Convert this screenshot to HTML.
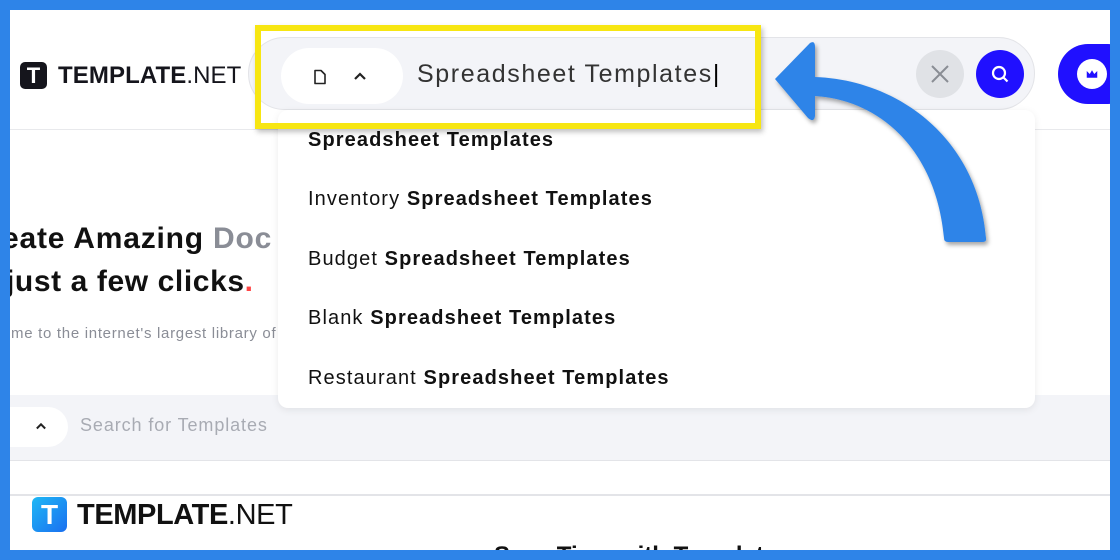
<!DOCTYPE html>
<html><head><meta charset="utf-8"><style>
*{margin:0;padding:0;box-sizing:border-box}
body{width:1120px;height:560px;overflow:hidden;background:#2e84e8;font-family:"Liberation Sans",sans-serif;position:relative}
.page{position:absolute;left:10px;top:10px;width:1100px;height:540px;background:#fff;overflow:hidden}
.abs{position:absolute}
.dd div{position:absolute;left:30px;font-size:20px;color:#111;white-space:nowrap;letter-spacing:1.1px}
.dd b{font-weight:bold}
</style></head><body>
<div class="page">
 <div class="abs" style="left:0;top:119px;width:1100px;height:1px;background:#e8e9ec"></div>
 <div class="abs" style="left:10px;top:52px;width:27px;height:27px;background:#15151c;border-radius:5px;color:#fff;font-weight:bold;font-size:22px;text-align:center;line-height:28px">T</div>
 <div class="abs" style="left:48px;top:52px;font-size:24px;color:#15151c;line-height:28px;letter-spacing:0.1px"><b>TEMPLATE</b>.NET</div>
 <div class="abs" style="left:238px;top:27px;width:787px;height:73px;background:#f3f4f8;border:1px solid #e3e4e8;border-radius:37px"></div>
 <div class="abs" style="left:271px;top:38px;width:122px;height:56px;background:#fff;border-radius:28px"></div>
 <svg class="abs" style="left:303px;top:59px" width="14" height="16" viewBox="0 0 14 16"><path d="M2 1.5h6l4 4v9H2z" fill="none" stroke="#222" stroke-width="1.6" stroke-linejoin="round"/></svg>
 <svg class="abs" style="left:342px;top:60px" width="16" height="12" viewBox="0 0 16 12"><path d="M3 9l5-5 5 5" fill="none" stroke="#222" stroke-width="2.2"/></svg>
 <div class="abs" style="left:407px;top:49px;font-size:25px;color:#333;line-height:30px;letter-spacing:1.6px;white-space:nowrap">Spreadsheet Templates<span style="color:#000;letter-spacing:0">|</span></div>
 <div class="abs" style="left:906px;top:40px;width:48px;height:48px;border-radius:50%;background:#e0e2e6"></div>
 <svg class="abs" style="left:920px;top:54px" width="20" height="20" viewBox="0 0 20 20"><path d="M2 2L18 18M18 2L2 18" stroke="#8a8d94" stroke-width="2"/></svg>
 <div class="abs" style="left:966px;top:40px;width:48px;height:48px;border-radius:50%;background:#2010ff"></div>
 <svg class="abs" style="left:980px;top:54px" width="20" height="20" viewBox="0 0 20 20"><circle cx="9" cy="9" r="6" fill="none" stroke="#fff" stroke-width="2.2"/><path d="M13.5 13.5l4 4" stroke="#fff" stroke-width="2.2"/></svg>
 <div class="abs" style="left:1048px;top:34px;width:80px;height:60px;border-radius:30px;background:#2010ff"></div>
 <div class="abs" style="left:1067px;top:49px;width:30px;height:30px;border-radius:50%;background:#fff"></div>
 <svg class="abs" style="left:1075px;top:58px" width="14" height="12" viewBox="0 0 18 16"><path d="M2 4l4 4 3-5 3 5 4-4v9H2z" fill="#2010ff"/></svg>
 <div class="abs" style="left:-8px;top:211px;font-size:30px;font-weight:bold;color:#111;white-space:nowrap;line-height:36px;letter-spacing:0.8px">eate Amazing <span style="color:#8a8d96">Doc</span></div>
 <div class="abs" style="left:-4px;top:254px;font-size:30px;font-weight:bold;color:#111;white-space:nowrap;line-height:36px;letter-spacing:0.6px">just a few clicks<span style="color:#ff4545">.</span></div>
 <div class="abs" style="left:-8px;top:315px;font-size:15px;color:#8a8d96;white-space:nowrap;letter-spacing:0.7px">ome to the internet's largest library of</div>
 <div class="abs" style="left:0;top:385px;width:1100px;height:66px;background:#f3f4f8;border-bottom:1px solid #e3e4e8"></div>
 <div class="abs" style="left:-30px;top:397px;width:88px;height:40px;background:#fff;border-radius:20px"></div>
 <svg class="abs" style="left:24px;top:411px" width="14" height="10" viewBox="0 0 16 12"><path d="M3 9l5-5 5 5" fill="none" stroke="#222" stroke-width="2.4"/></svg>
 <div class="abs" style="left:70px;top:405px;font-size:18px;color:#a8abb3;letter-spacing:0.9px">Search for Templates</div>
 <div class="abs" style="left:0;top:484px;width:1100px;height:2px;background:#e3e4e8"></div>
 <div class="abs" style="left:22px;top:487px;width:35px;height:35px;border-radius:6px;background:linear-gradient(135deg,#1fb8f5,#1a6ff0);color:#fff;font-weight:bold;font-size:28px;text-align:center;line-height:36px">T</div>
 <div class="abs" style="left:67px;top:488px;font-size:29px;color:#111;line-height:34px;letter-spacing:-0.4px"><b>TEMPLATE</b>.NET</div>
 <div class="abs" style="left:484px;top:532px;font-size:24px;font-weight:bold;color:#111;white-space:nowrap">Save Time with Templates</div>
 <div class="abs dd" style="left:268px;top:100px;width:757px;height:298px;background:#fff;border-radius:10px;box-shadow:0 2px 8px rgba(0,0,0,.08)">
  <div style="top:19px"><b>Spreadsheet Templates</b></div>
  <div style="top:78px">Inventory <b>Spreadsheet Templates</b></div>
  <div style="top:138px">Budget <b>Spreadsheet Templates</b></div>
  <div style="top:197px">Blank <b>Spreadsheet Templates</b></div>
  <div style="top:257px">Restaurant <b>Spreadsheet Templates</b></div>
 </div>
 <div class="abs" style="left:245px;top:15px;width:506px;height:104px;border:6px solid #f7e612;box-shadow:2px 3px 5px rgba(0,0,0,.25)"></div>
 <svg class="abs" style="left:0;top:0" width="1100" height="540" viewBox="10 10 1100 540">
  <defs><filter id="sh" x="-20%" y="-20%" width="140%" height="140%"><feDropShadow dx="2" dy="3" stdDeviation="2" flood-color="#000" flood-opacity=".35"/></filter></defs>
  <path filter="url(#sh)" fill="#2e84e8" d="M775 79 L810 43 Q815 40 815 47 L815 77 C900 80 978 140 986 238 Q987 242 982 242 L948 242 Q944 242 944 238 C936 150 880 100 815 96 L815 116 Q814 123 808 118 Z"/>
 </svg>
</div>
</body></html>
